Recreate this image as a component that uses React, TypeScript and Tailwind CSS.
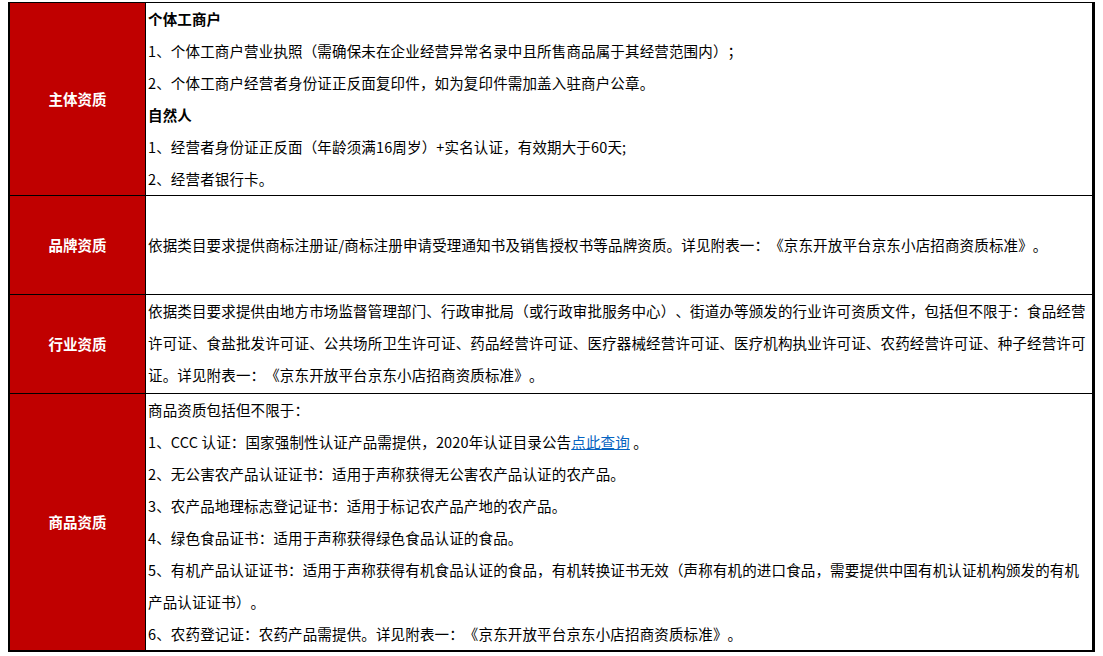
import React from "react";

const fontStack = "font-['Noto_Sans_CJK_SC','Noto_Sans',sans-serif]";

function Label({ text }: { text: string }) {
  return (
    <div className="w-[136px] shrink-0 bg-[#c00000] border-r border-black flex items-center justify-center text-white font-bold text-[14.5px]">
      {text}
    </div>
  );
}

function Row({
  label,
  children,
  height,
  center = false,
  last = false,
}: {
  label: string;
  children: React.ReactNode;
  height: string;
  center?: boolean;
  last?: boolean;
}) {
  return (
    <div className={`flex ${height} ${last ? "" : "border-b border-black"}`}>
      <Label text={label} />
      <div
        className={`flex-1 pl-[2px] pr-[4px] leading-[32px] whitespace-nowrap tracking-[0.15px] ${
          center ? "flex items-center" : ""
        }`}
      >
        <div>{children}</div>
      </div>
    </div>
  );
}

export default function App() {
  return (
    <div
      className={`bg-white min-h-[656px] w-[1103px] pt-[2px] pl-[8px] [text-spacing-trim:space-all] ${fontStack}`}
    >
      <div className="w-[1087px] border-t border-l-2 border-r-[3px] border-b-2 border-black text-[14.5px] text-black">
        <Row label="主体资质" height="h-[193px]">
          <p className="font-bold">个体工商户</p>
          <p>1、个体工商户营业执照（需确保未在企业经营异常名录中且所售商品属于其经营范围内）；</p>
          <p>2、个体工商户经营者身份证正反面复印件，如为复印件需加盖入驻商户公章。</p>
          <p className="font-bold">自然人</p>
          <p>1、经营者身份证正反面（年龄须满16周岁）+实名认证，有效期大于60天;</p>
          <p>2、经营者银行卡。</p>
        </Row>

        <Row label="品牌资质" height="h-[99px]" center>
          <p>
            依据类目要求提供商标注册证/商标注册申请受理通知书及销售授权书等品牌资质。详见附表一：《京东开放平台京东小店招商资质标准》。
          </p>
        </Row>

        <Row label="行业资质" height="h-[99px]">
          <p>
            依据类目要求提供由地方市场监督管理部门、行政审批局（或行政审批服务中心）、街道办等颁发的行业许可资质文件，包括但不限于：食品经营
            <br />
            许可证、食盐批发许可证、公共场所卫生许可证、药品经营许可证、医疗器械经营许可证、医疗机构执业许可证、农药经营许可证、种子经营许可
            <br />
            证。详见附表一：《京东开放平台京东小店招商资质标准》。
          </p>
        </Row>

        <Row label="商品资质" height="h-[256px]" last>
          <p>商品资质包括但不限于：</p>
          <p>
            1、CCC 认证：国家强制性认证产品需提供，2020年认证目录公告
            <a className="text-[#0563c1] underline" href="#">
              点此查询
            </a>{" "}
            。
          </p>
          <p>2、无公害农产品认证证书：适用于声称获得无公害农产品认证的农产品。</p>
          <p>3、农产品地理标志登记证书：适用于标记农产品产地的农产品。</p>
          <p>4、绿色食品证书：适用于声称获得绿色食品认证的食品。</p>
          <p>
            5、有机产品认证证书：适用于声称获得有机食品认证的食品，有机转换证书无效（声称有机的进口食品，需要提供中国有机认证机构颁发的有机
            <br />
            产品认证证书）。
          </p>
          <p>6、农药登记证：农药产品需提供。详见附表一：《京东开放平台京东小店招商资质标准》。</p>
        </Row>
      </div>
    </div>
  );
}
